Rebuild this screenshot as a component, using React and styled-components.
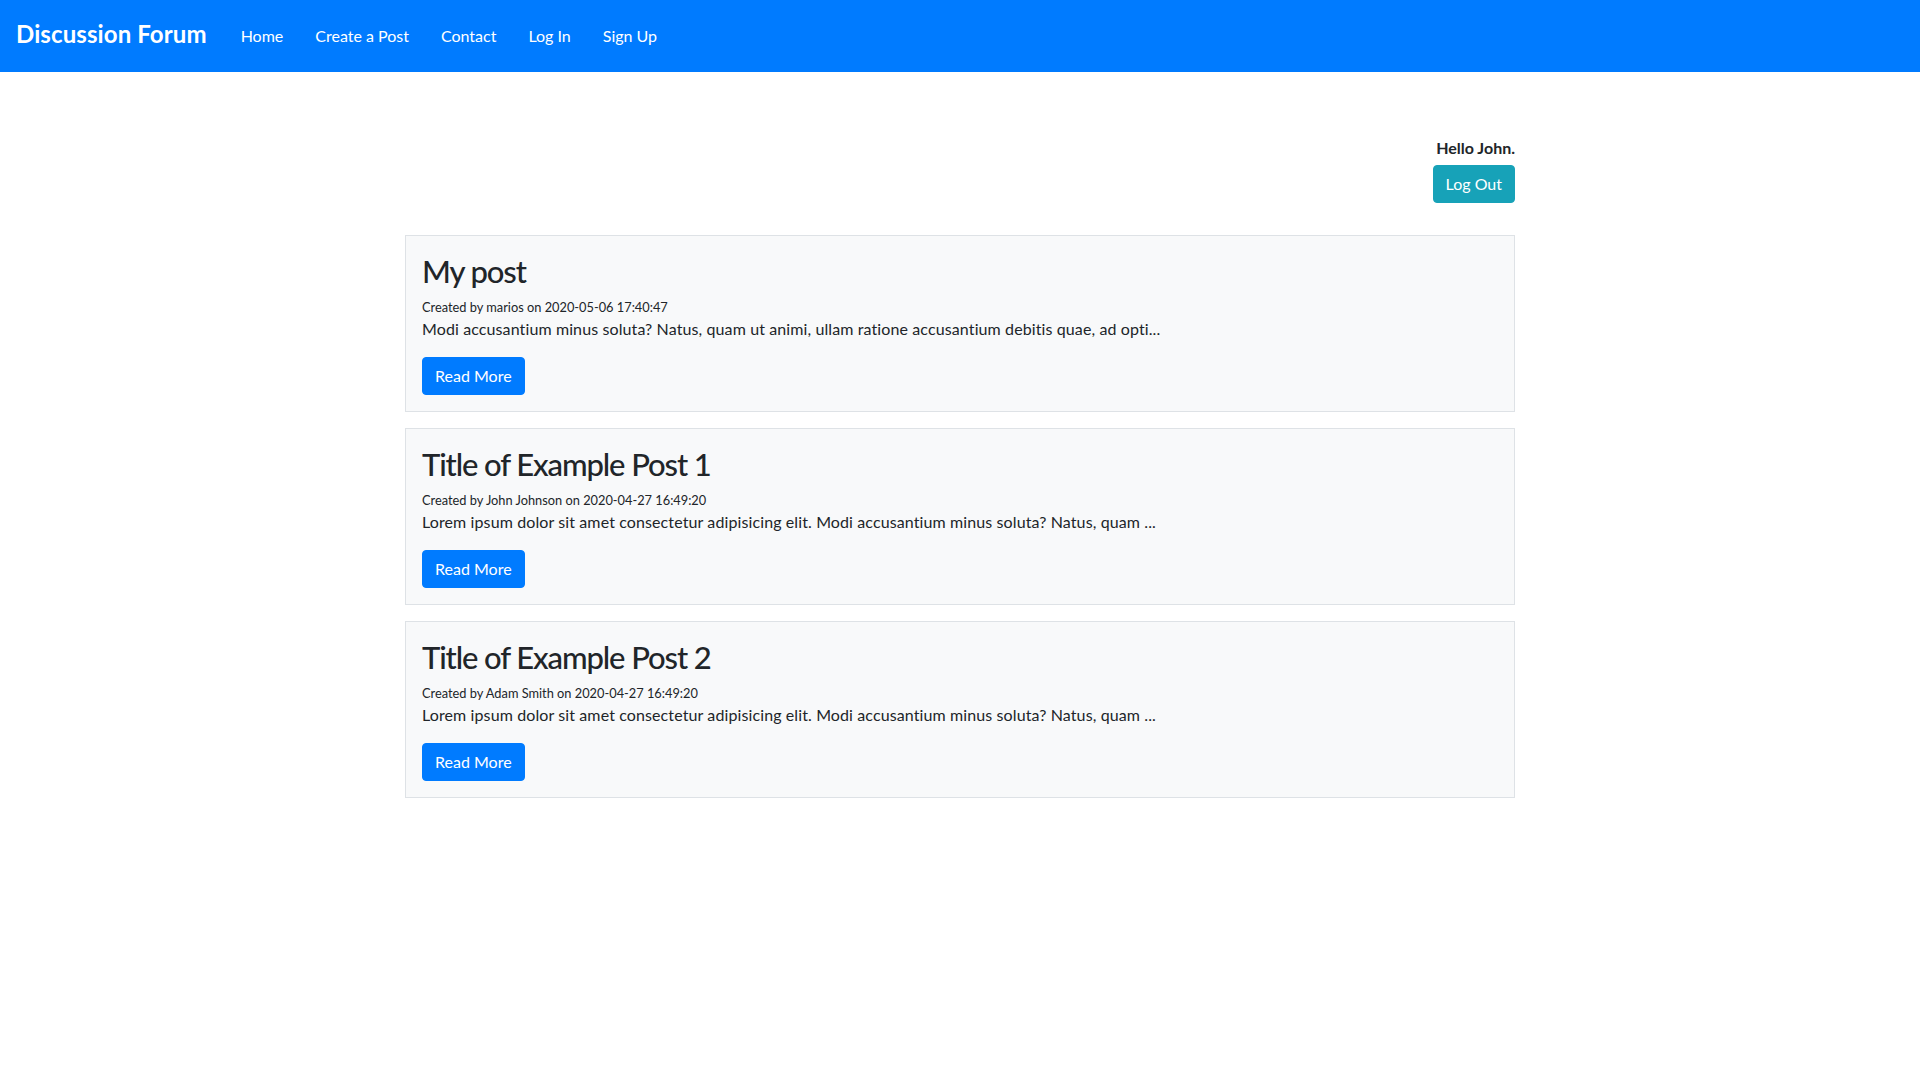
import React from 'react';
import styled, { createGlobalStyle } from 'styled-components';

const GlobalStyle = createGlobalStyle`
  html, body {
    margin: 0;
    padding: 0;
    background: #ffffff;
  }

  body {
    font-family: Lato, 'Noto Sans', sans-serif;
    font-size: 16px;
    line-height: 1.5;
    color: #212529;
  }

  * {
    box-sizing: border-box;
  }
`

const Navbar = styled.nav`
  display: flex;
  align-items: center;

  height: 72px;
  padding: 0 16px;

  background-color: #007bff;
`

const Brand = styled.a`
  margin-right: 18px;
  margin-top: -4px;

  font-size: 24px;
  font-weight: 700;
  line-height: 30px;
  letter-spacing: 0.1px;

  color: #ffffff;
  text-decoration: none;
`

const NavList = styled.ul`
  display: flex;

  margin: 0;
  padding: 0;

  list-style: none;
`

const NavLink = styled.a`
  display: block;
  padding: 8px 16px;

  font-size: 16px;
  line-height: 24px;

  color: #ffffff;
  text-decoration: none;
`

const Container = styled.main`
  width: 1110px;
  margin: 0 auto;
  padding-top: 64px;
`

const Greeting = styled.div`
  display: flex;
  flex-direction: column;
  align-items: flex-end;
  gap: 5px;

  margin-bottom: 32px;
`

const HelloText = styled.span`
  font-weight: 700;
  line-height: 24px;
`

const Button = styled.a`
  display: inline-block;
  padding: 6px 12px;

  font-size: 16px;
  line-height: 24px;

  color: #ffffff;
  background-color: ${props => props.color};
  border: 1px solid ${props => props.color};
  border-radius: 4px;
  text-decoration: none;
`

const Card = styled.article`
  display: flex;
  flex-direction: column;
  align-items: flex-start;

  margin-bottom: 16px;
  padding: 16px;

  background-color: #f8f9fa;
  border: 1px solid #dee2e6;
`

const PostTitle = styled.h2`
  margin: 0 0 7px;

  font-size: 31px;
  font-weight: 500;
  line-height: 38px;
  letter-spacing: -1.1px;
`

const Meta = styled.small`
  display: block;

  font-size: 12.8px;
  line-height: 20px;
`

const Excerpt = styled.p`
  margin: 0 0 16px;

  line-height: 24px;
  letter-spacing: 0.11px;
`

const posts = [
  {
    title: 'My post',
    author: 'marios',
    date: '2020-05-06 17:40:47',
    excerpt: 'Modi accusantium minus soluta? Natus, quam ut animi, ullam ratione accusantium debitis quae, ad opti...',
  },
  {
    title: 'Title of Example Post 1',
    author: 'John Johnson',
    date: '2020-04-27 16:49:20',
    excerpt: 'Lorem ipsum dolor sit amet consectetur adipisicing elit. Modi accusantium minus soluta? Natus, quam ...',
  },
  {
    title: 'Title of Example Post 2',
    author: 'Adam Smith',
    date: '2020-04-27 16:49:20',
    excerpt: 'Lorem ipsum dolor sit amet consectetur adipisicing elit. Modi accusantium minus soluta? Natus, quam ...',
  },
];

const links = ['Home', 'Create a Post', 'Contact', 'Log In', 'Sign Up'];

const App = () => {
    return (
        <>
            <GlobalStyle/>
            <Navbar>
                <Brand href="#">Discussion Forum</Brand>
                <NavList>
                    {links.map(link => (
                        <li key={link}>
                            <NavLink href="#">{link}</NavLink>
                        </li>
                    ))}
                </NavList>
            </Navbar>
            <Container>
                <Greeting>
                    <HelloText>Hello John.</HelloText>
                    <Button href="#" color="#17a2b8">Log Out</Button>
                </Greeting>
                {posts.map(post => (
                    <Card key={post.title}>
                        <PostTitle>{post.title}</PostTitle>
                        <Meta>Created by {post.author} on {post.date}</Meta>
                        <Excerpt>{post.excerpt}</Excerpt>
                        <Button href="#" color="#007bff">Read More</Button>
                    </Card>
                ))}
            </Container>
        </>
    );
};

export default App;
